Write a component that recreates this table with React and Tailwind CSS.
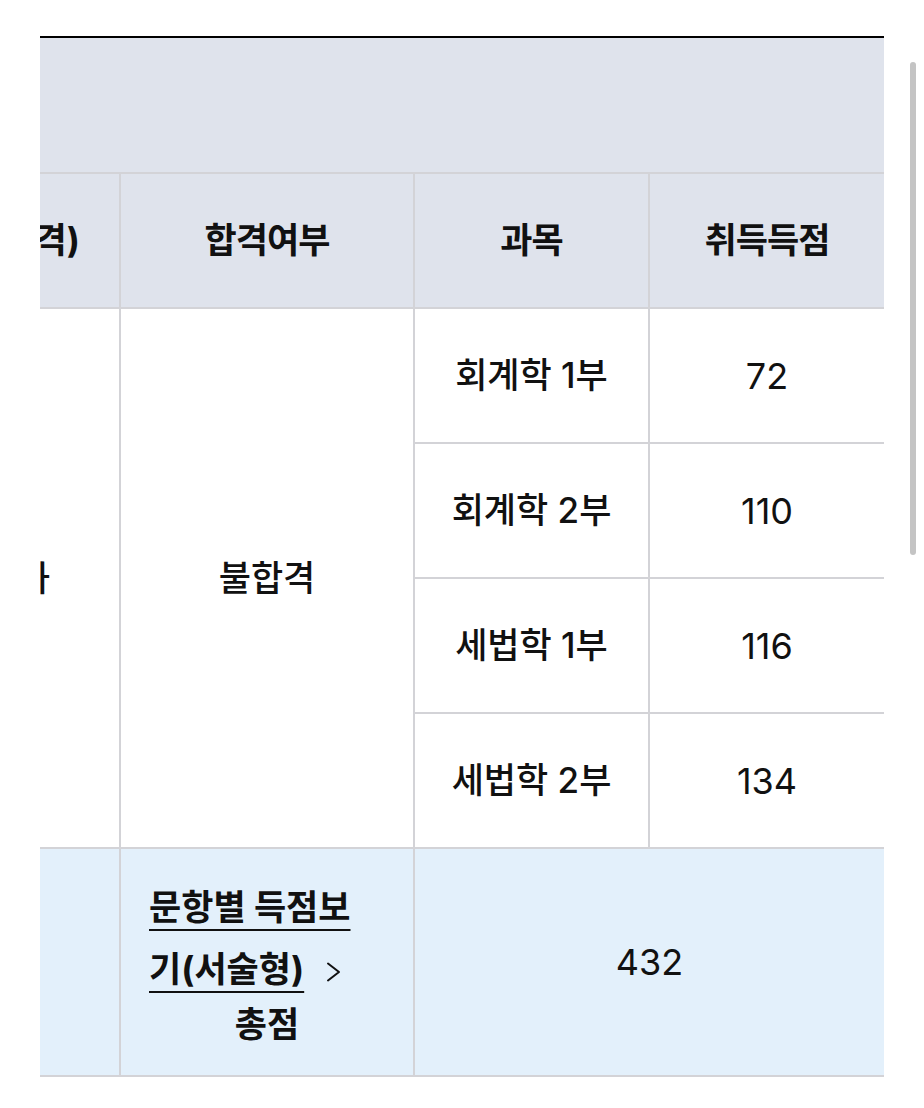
const subjects = [
    {name: "회계학 1부", score: 72},
    {name: "회계학 2부", score: 110},
    {name: "세법학 1부", score: 116},
    {name: "세법학 2부", score: 134},
];

function Chevron() {
    return (
        <svg width="15" height="20" viewBox="0 0 15 20" fill="none" className="inline-block ml-[22px] align-[0px]">
            <path d="M2 1.5 L13 10 L2 18.5" stroke="#111" strokeWidth="2" strokeLinecap="round" strokeLinejoin="round"/>
        </svg>
    );
}

export default function App() {
    const cell = "flex items-center justify-center border-b-2 border-[#d3d3d7]";

    return (
        <div className="relative min-h-[1108px] bg-white pt-[36px] pl-[40px] text-[#111] font-['Inter','Noto_Sans_CJK_KR',sans-serif]">
            <div className="w-[844px] overflow-hidden border-t-2 border-black">
                <div className="ml-[-119px] grid grid-cols-[200px_294px_235px_234px] grid-rows-[136px_135px_135px_135px_135px_135px_228px] text-[35px] font-medium">
                    {/* top band */}
                    <div className="col-span-4 bg-[#dfe3ec] border-b-2 border-[#d3d3d7]"></div>

                    {/* header */}
                    <div className={`${cell} border-r-2 bg-[#dfe3ec] justify-end pr-[39px] font-bold whitespace-nowrap`}>결과(합격/불합격)</div>
                    <div className={`${cell} border-r-2 bg-[#dfe3ec] font-bold tracking-[-1px]`}>합격여부</div>
                    <div className={`${cell} border-r-2 bg-[#dfe3ec] font-bold tracking-[-1px]`}>과목</div>
                    <div className={`${cell} bg-[#dfe3ec] font-bold tracking-[-1px]`}>취득득점</div>

                    {/* body */}
                    <div className={`${cell} row-span-4 border-r-2 justify-end pr-[69px] whitespace-nowrap`}>평균 60점 이하</div>
                    <div className={`${cell} row-span-4 border-r-2`}>불합격</div>
                    {subjects.map((s) => (
                        <div key={s.name} className="contents">
                            <div className={`${cell} border-r-2`}>{s.name}</div>
                            <div className={`${cell} text-[36px] font-normal`}>{s.score}</div>
                        </div>
                    ))}

                    {/* total */}
                    <div className={`${cell} border-r-2 bg-[#e3f0fb]`}></div>
                    <div className={`${cell} border-r-2 bg-[#e3f0fb] flex-col items-stretch font-bold`}>
                        <a href="#" className="block pl-[28px] leading-[62px] underline decoration-2 underline-offset-[9px]">
                            문항별 득점보<br/>기(서술형)
                            <Chevron/>
                        </a>
                        <div className="text-center leading-[48px]">총점</div>
                    </div>
                    <div className={`${cell} col-span-2 bg-[#e3f0fb] text-[36px] font-normal`}>432</div>
                </div>
            </div>

            {/* scroll indicator */}
            <div className="absolute left-[910px] top-[62px] w-[6px] h-[493px] rounded-full bg-[#c4c4c4]"></div>
        </div>
    );
}
